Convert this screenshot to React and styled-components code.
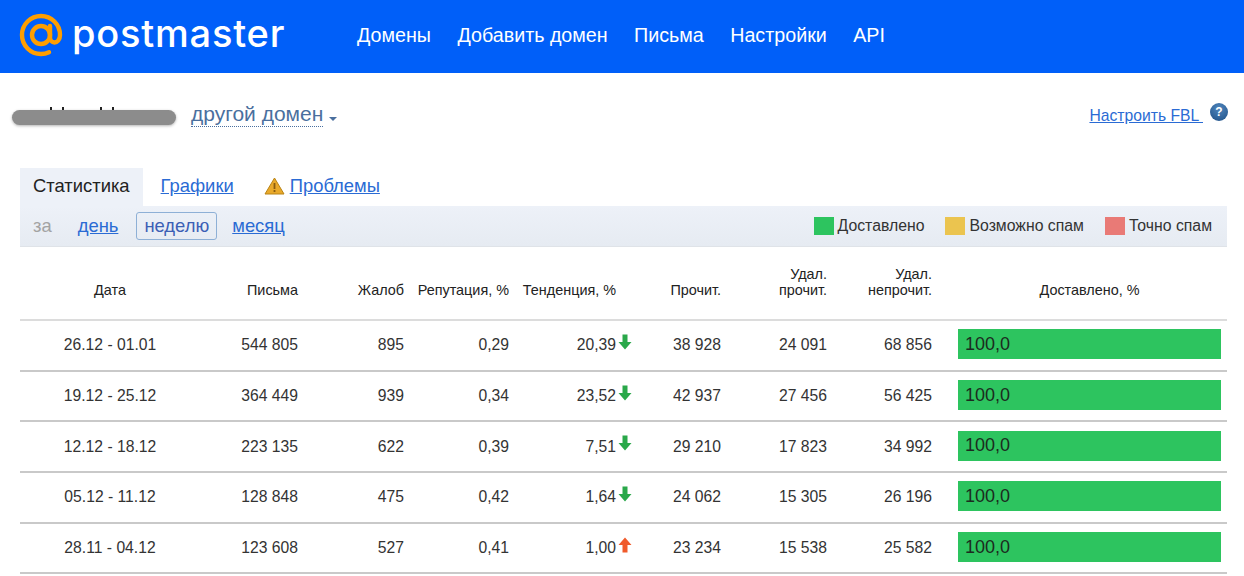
import React from 'react';
import styled, { createGlobalStyle } from 'styled-components';

const GlobalStyle = createGlobalStyle`
  html, body {
    margin: 0;
    padding: 0;
    background: #fff;
    font-family: "Liberation Sans", Arial, sans-serif;
    color: #222;
  }
  * { box-sizing: border-box; }
`;

const rows = [
  { date: '26.12 - 01.01', mails: '544 805', complaints: '895', rep: '0,29', trend: '20,39', up: false, read: '38 928', delRead: '24 091', delUnread: '68 856' },
  { date: '19.12 - 25.12', mails: '364 449', complaints: '939', rep: '0,34', trend: '23,52', up: false, read: '42 937', delRead: '27 456', delUnread: '56 425' },
  { date: '12.12 - 18.12', mails: '223 135', complaints: '622', rep: '0,39', trend: '7,51', up: false, read: '29 210', delRead: '17 823', delUnread: '34 992' },
  { date: '05.12 - 11.12', mails: '128 848', complaints: '475', rep: '0,42', trend: '1,64', up: false, read: '24 062', delRead: '15 305', delUnread: '26 196' },
  { date: '28.11 - 04.12', mails: '123 608', complaints: '527', rep: '0,41', trend: '1,00', up: true, read: '23 234', delRead: '15 538', delUnread: '25 582' },
];

const navItems = ['Домены', 'Добавить домен', 'Письма', 'Настройки', 'API'];

const legend = [
  { label: 'Доставлено', color: '#2dc45f' },
  { label: 'Возможно спам', color: '#ebc44f' },
  { label: 'Точно спам', color: '#e97a76' },
];

const Header = styled.header`
  display: flex;
  align-items: center;
  height: 73px;
  padding-left: 19px;
  background: #005ff9;
`;

const Logo = styled.div`
  display: flex;
  align-items: center;
  gap: 9px;
  width: 338px;
  margin-top: -4px;
`;

const LogoText = styled.span`
  color: #fff;
  font-family: "Inter", sans-serif;
  font-size: 38px;
  font-weight: 500;
  letter-spacing: 0.8px;
  line-height: 1;
  margin-top: -4px;
`;

const Nav = styled.nav`
  display: flex;
  gap: 26.4px;
  margin-top: -3px;
`;

const NavItem = styled.a`
  color: #fff;
  font-size: 19.7px;
`;

const TopBar = styled.div`
  display: flex;
  align-items: flex-start;
  justify-content: space-between;
  height: 95px;
  padding: 28px 16px 0 12px;
`;

const DomainPick = styled.div`
  display: flex;
  align-items: center;
  gap: 15px;
`;

const Redacted = styled.div`
  position: relative;
  width: 164px;
  height: 15px;
  margin-top: 7px;
  border-radius: 8px;
  background: #8c8c8c;
  box-shadow: 0 1px 3px rgba(0, 0, 0, 0.3);

  &::before {
    content: '';
    position: absolute;
    top: -3px;
    left: 38px;
    width: 2px;
    height: 3px;
    background: #222;
    box-shadow: 12px 0 #222, 50px 0 #222, 62px 0 #222;
  }
`;

const OtherDomain = styled.a`
  color: #4a6f9e;
  font-size: 21px;
  line-height: 25px;
  border-bottom: 1px dotted #4a6f9e;
`;

const Caret = styled.span`
  align-self: flex-end;
  width: 0;
  height: 0;
  margin: 0 0 6px -9px;
  border-left: 4px solid transparent;
  border-right: 4px solid transparent;
  border-top: 4px solid #4a6f9e;
`;

const FblBox = styled.div`
  display: flex;
  align-items: flex-start;
  gap: 7px;
  padding-top: 6px;
`;

const Link = styled.a`
  color: #2a6bd4;
  font-size: ${p => p.$size || 18.4}px;
  text-decoration: underline;
  white-space: pre;
`;

const Help = styled.span`
  display: flex;
  align-items: center;
  justify-content: center;
  width: 18px;
  height: 18px;
  margin-top: -4px;
  border-radius: 50%;
  background: radial-gradient(circle at 50% 30%, #4f86bd, #1e4f85);
  color: #fff;
  font-size: 12px;
  font-weight: 700;
`;

const Main = styled.main`
  padding: 0 17px 0 20px;
`;

const Tabs = styled.div`
  display: flex;
  align-items: center;
  height: 38px;
  padding-bottom: 3px;
`;

const ActiveTab = styled.div`
  display: flex;
  align-items: center;
  height: 38px;
  margin-bottom: -3px;
  padding: 0 13px 3px;
  background: #edf1f8;
  color: #222;
  font-size: 18.4px;
`;

const TabItem = styled.div`
  display: flex;
  align-items: center;
  gap: 5px;
  margin-left: ${p => p.$left}px;
`;

const Toolbar = styled.div`
  display: flex;
  align-items: center;
  justify-content: space-between;
  height: 41px;
  padding: 0 15px 0 13px;
  background: linear-gradient(#edf1f8, #e6ebf2);
  border-bottom: 1px solid #dfe3e8;
`;

const Periods = styled.div`
  display: flex;
  align-items: center;
`;

const Muted = styled.span`
  margin-right: 26px;
  color: #a3a3a3;
  font-size: 18.4px;
`;

const Current = styled.span`
  display: flex;
  align-items: center;
  height: 28px;
  margin: 0 15px 0 18px;
  padding: 0 7px;
  border: 1px solid #8eb0d6;
  border-radius: 3px;
  color: #3c5fb5;
  font-size: 18.4px;
`;

const Legend = styled.div`
  display: flex;
  gap: 21px;
`;

const LegendItem = styled.div`
  display: flex;
  align-items: center;
  gap: 4px;
  color: #333;
  font-size: 15.8px;
`;

const Swatch = styled.i`
  display: block;
  width: 20px;
  height: 18px;
  background: ${p => p.$color};
`;

const Table = styled.table`
  width: 1207px;
  border-collapse: collapse;
  table-layout: fixed;
`;

const Th = styled.th`
  height: 73px;
  padding: ${p => (p.$bar ? '0 6px 21px 16px' : p.$align ? '0 0 21px' : '0 10px 21px 0')};
  border-bottom: 2px solid #dcdcdc;
  color: #222;
  font-size: 14.4px;
  font-weight: 400;
  line-height: 16px;
  text-align: ${p => p.$align || 'right'};
  vertical-align: bottom;
`;

const Tr = styled.tr`
  height: 50.7px;
`;

const Td = styled.td`
  padding: ${p => (p.$align ? '0' : '0 10px 0 0')};
  border-bottom: 2px solid #c9c9c9;
  color: #333;
  font-size: 15.7px;
  text-align: ${p => p.$align || 'right'};
  white-space: nowrap;
`;

const Trend = styled.span`
  display: inline-flex;
  align-items: center;
  gap: 2px;
`;

const BarCell = styled.td`
  padding: 0 6px 2px 16px;
  border-bottom: 2px solid #c9c9c9;
`;

const Bar = styled.div`
  display: flex;
  align-items: center;
  height: 30px;
  padding-left: 7px;
  background: #2dc45f;
  color: #1c2b20;
  font-size: 18px;
`;

const ArrowSvg = styled.svg`
  margin-top: -7px;
  transform: ${p => (p.$up ? 'none' : 'rotate(180deg)')};
`;

const LogoIcon = () => (
  <svg width="44" height="44" viewBox="0 0 44 44" fill="none" stroke="#ff9e00" strokeWidth="4.4">
    <circle cx="22" cy="22" r="9" />
    <path d="M31 13v11.500c0 3 2 5 4.500 5s5.500-2.500 5.500-7.500C41 11.500 32.500 3 22 3S3 11.500 3 22s8.500 19 19 19c3 0 5.500-.6 8-1.800" strokeLinecap="round" />
  </svg>
);

const WarnIcon = () => (
  <svg width="21" height="18" viewBox="0 0 21 18">
    <path d="M10.500 1 20 17H1z" fill="#e9a92a" stroke="#b98314" strokeLinejoin="round" />
    <rect x="9.600" y="6" width="1.800" height="6" fill="#8a5c10" />
    <rect x="9.600" y="13" width="1.800" height="2" fill="#8a5c10" />
  </svg>
);

const Arrow = ({ up }) => (
  <ArrowSvg $up={up} width="14" height="16" viewBox="0 0 14 16">
    <path d="M7 0.500 13.500 8H9.500V15.500H4.500V8H.5z" fill={up ? '#f05a2b' : '#2aa84a'} />
  </ArrowSvg>
);

export default function App() {
  return (
    <>
      <GlobalStyle />
      <Header>
        <Logo>
          <LogoIcon />
          <LogoText>postmaster</LogoText>
        </Logo>
        <Nav>
          {navItems.map(item => <NavItem key={item}>{item}</NavItem>)}
        </Nav>
      </Header>
      <TopBar>
        <DomainPick>
          <Redacted />
          <OtherDomain>другой домен</OtherDomain>
          <Caret />
        </DomainPick>
        <FblBox>
          <Link $size={15.7}>Настроить FBL </Link>
          <Help>?</Help>
        </FblBox>
      </TopBar>
      <Main>
        <Tabs>
          <ActiveTab>Статистика</ActiveTab>
          <TabItem $left={18}><Link>Графики</Link></TabItem>
          <TabItem $left={30}><WarnIcon /><Link>Проблемы</Link></TabItem>
        </Tabs>
        <Toolbar>
          <Periods>
            <Muted>за</Muted>
            <Link>день</Link>
            <Current>неделю</Current>
            <Link>месяц</Link>
          </Periods>
          <Legend>
            {legend.map(l => (
              <LegendItem key={l.label}>
                <Swatch $color={l.color} />
                {l.label}
              </LegendItem>
            ))}
          </Legend>
        </Toolbar>
        <Table>
          <colgroup>
            <col width="180" />
            <col width="108" />
            <col width="106" />
            <col width="105" />
            <col width="123" />
            <col width="89" />
            <col width="106" />
            <col width="105" />
            <col width="285" />
          </colgroup>
          <thead>
            <tr>
              <Th $align="center">Дата</Th>
              <Th>Письма</Th>
              <Th>Жалоб</Th>
              <Th>Репутация, %</Th>
              <Th>Тенденция, %&nbsp;&nbsp;&nbsp;&nbsp;</Th>
              <Th>Прочит.</Th>
              <Th>Удал.<br />прочит.</Th>
              <Th>Удал.<br />непрочит.</Th>
              <Th $align="center" $bar>Доставлено, %</Th>
            </tr>
          </thead>
          <tbody>
            {rows.map(r => (
              <Tr key={r.date}>
                <Td $align="center">{r.date}</Td>
                <Td>{r.mails}</Td>
                <Td>{r.complaints}</Td>
                <Td>{r.rep}</Td>
                <Td><Trend>{r.trend}<Arrow up={r.up} /></Trend></Td>
                <Td>{r.read}</Td>
                <Td>{r.delRead}</Td>
                <Td>{r.delUnread}</Td>
                <BarCell><Bar>100,0</Bar></BarCell>
              </Tr>
            ))}
          </tbody>
        </Table>
      </Main>
    </>
  );
}
